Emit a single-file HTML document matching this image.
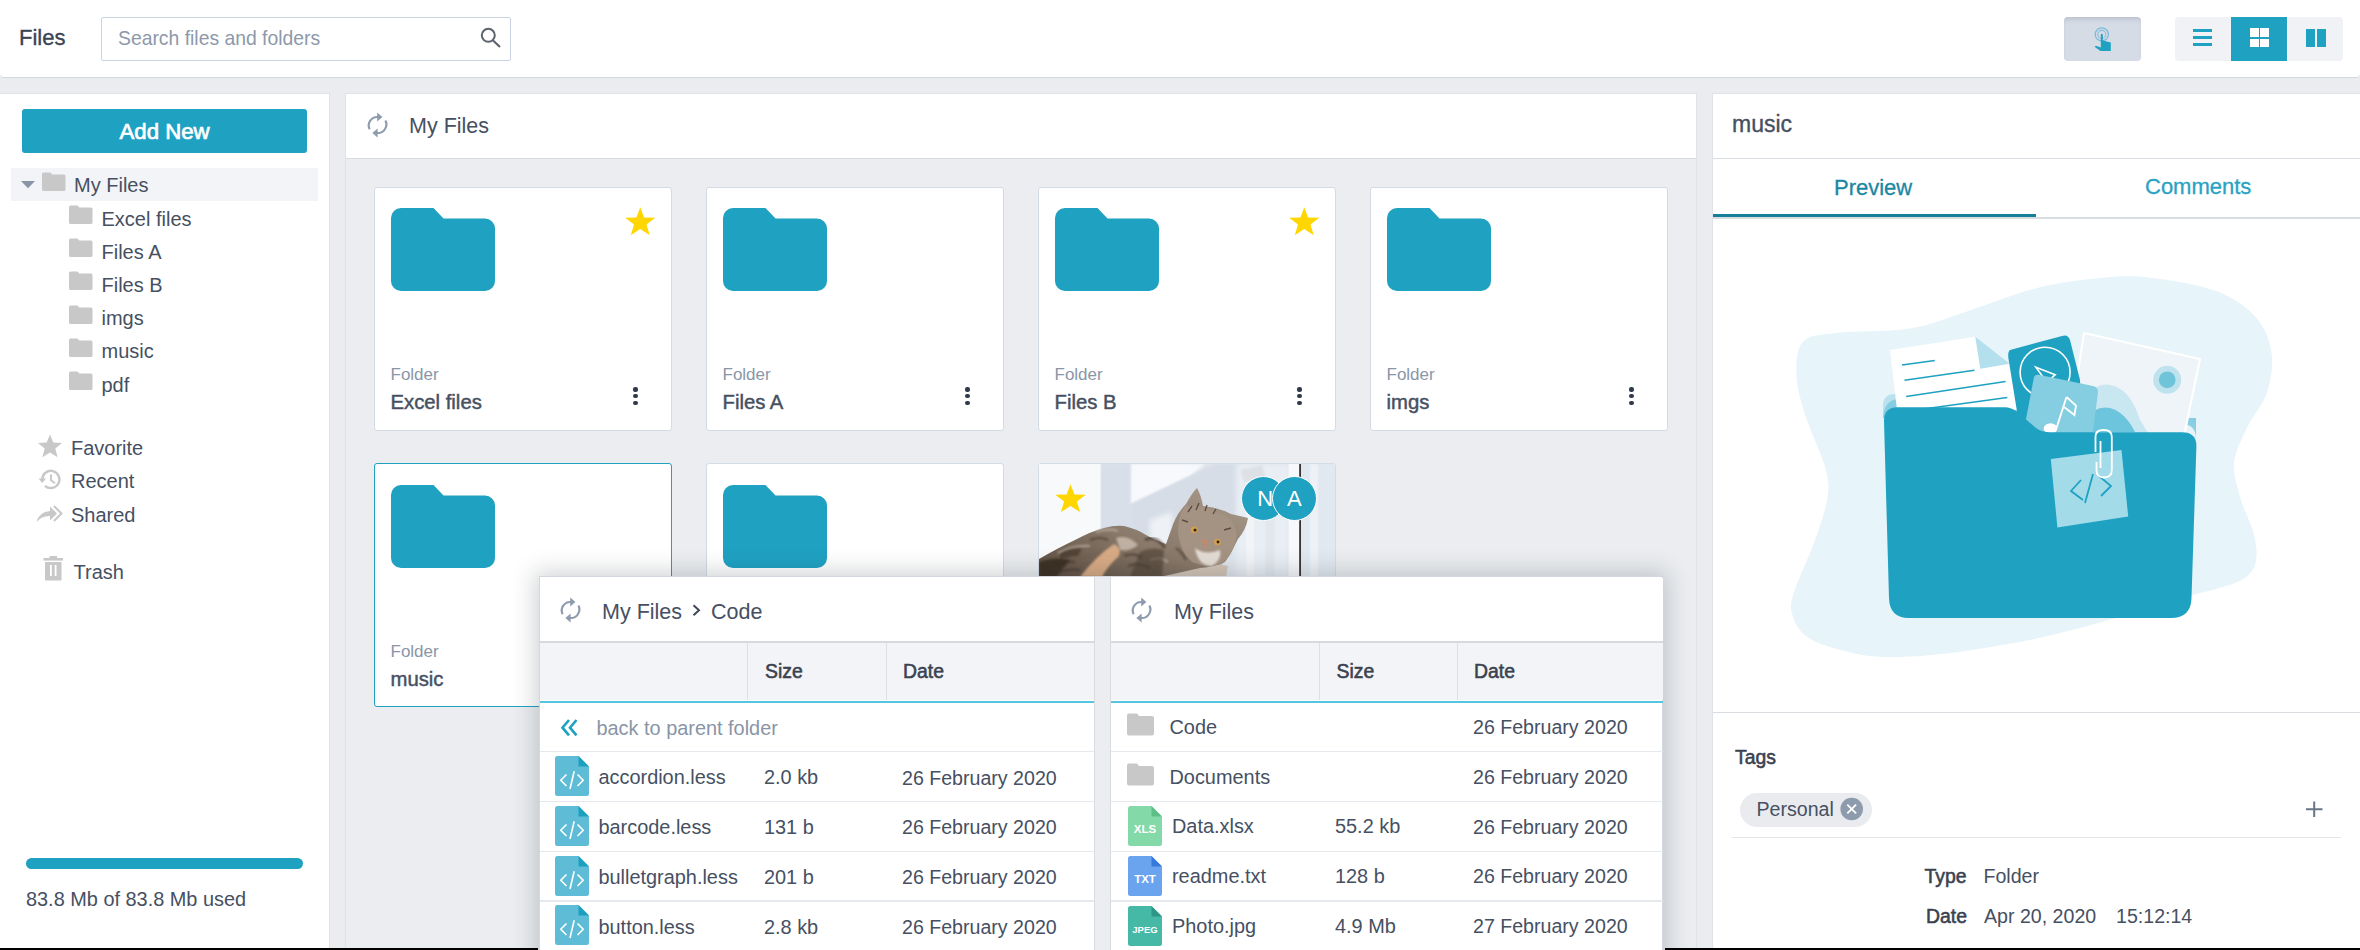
<!DOCTYPE html>
<html><head><meta charset="utf-8">
<style>
*{box-sizing:border-box;margin:0;padding:0}
html,body{width:2360px;height:950px;overflow:hidden}
body{background:#eaecf0;font-family:"Liberation Sans",sans-serif;color:#3f4857;position:relative}
.a{position:absolute}
.t{position:absolute;white-space:pre;line-height:1}
</style></head><body>
<div class="a" style="left:0px;top:0px;width:2360px;height:78px;background:#fff;border-bottom:1px solid #d4d8de;border-radius:0 0 4px 4px"></div>
<div class="t" style="left:19.00px;top:26.88px;font-size:22px;color:#3b4453;font-weight:400;-webkit-text-stroke:0.35px #3b4453">Files</div>
<div class="a" style="left:101px;top:17px;width:409.5px;height:44px;border:1.2px solid #cad4e0;border-radius:2px;background:#fff"></div>
<div class="t" style="left:118.00px;top:29.12px;font-size:19.35px;color:#8d99aa;font-weight:400;">Search files and folders</div>
<svg class="a" style="left:476px;top:24px;" width="30" height="30" viewBox="0 0 30 30"><circle cx="12.3" cy="11.3" r="6.5" fill="none" stroke="#5c636e" stroke-width="2"/><line x1="16.8" y1="16.2" x2="24" y2="23" stroke="#5c636e" stroke-width="2.2" stroke-linecap="butt"/></svg>
<div class="a" style="left:2064px;top:17px;width:77px;height:44px;background:linear-gradient(#c9d0dc,#d6dce6 8px,#d6dce6);border-radius:4px;box-shadow:inset 0 2px 3px rgba(0,0,0,.06)"></div>
<svg class="a" style="left:2085px;top:20px;" width="35" height="38" viewBox="0 0 35 38"><circle cx="16.8" cy="14.4" r="6.6" fill="none" stroke="#43a3d0" stroke-width="1.3" opacity=".6"/><circle cx="16.8" cy="14.4" r="4" fill="none" stroke="#43a3d0" stroke-width="1.1" opacity=".55"/><path d="M15.8 14.5 Q16.8 13.2 17.8 14.5 L17.8 20.5 L25.8 22.5 L25.8 31 L15.5 31 L9.5 26.8 Q10.2 25.6 11.6 26 L15.8 27.6 Z" fill="#1fa1c2"/></svg>
<div class="a" style="left:2175px;top:17px;width:56px;height:44px;background:#f0f2f6;border-radius:4px 0 0 4px"></div>
<div class="a" style="left:2231px;top:17px;width:56px;height:44px;background:#1fa1c2"></div>
<div class="a" style="left:2288px;top:17px;width:55px;height:44px;background:#f0f2f6;border-radius:0 4px 4px 0"></div>
<div class="a" style="left:2193px;top:28.5px;width:19px;height:3.5px;background:#1fa1c2"></div>
<div class="a" style="left:2193px;top:35.5px;width:19px;height:3.5px;background:#1fa1c2"></div>
<div class="a" style="left:2193px;top:42.5px;width:19px;height:3.5px;background:#1fa1c2"></div>
<div class="a" style="left:2249.5px;top:28px;width:9.0px;height:9px;background:#fff"></div>
<div class="a" style="left:2260px;top:28px;width:9px;height:9px;background:#fff"></div>
<div class="a" style="left:2249.5px;top:38.5px;width:9.0px;height:8.5px;background:#fff"></div>
<div class="a" style="left:2260px;top:38.5px;width:9px;height:8.5px;background:#fff"></div>
<div class="a" style="left:2306px;top:29px;width:9px;height:17.5px;background:#1fa1c2"></div>
<div class="a" style="left:2317px;top:29px;width:8.5px;height:17.5px;background:#1fa1c2"></div>
<div class="a" style="left:-2px;top:93px;width:332px;height:867px;background:#fff;border:1px solid #dfe2e7"></div>
<div class="a" style="left:345px;top:93px;width:1352px;height:867px;background:#ebedf0;border:1px solid #dfe2e7"></div>
<div class="a" style="left:346px;top:94px;width:1350px;height:65px;background:#fff;border-bottom:1px solid #d8dce2"></div>
<div class="a" style="left:1712px;top:93px;width:658px;height:867px;background:#fff;border:1px solid #dfe2e7"></div>
<div class="a" style="left:22px;top:109px;width:285px;height:44px;background:#1fa1c2;border-radius:3px"></div>
<div class="t" style="left:119.50px;top:121.21px;font-size:22.2px;color:#ffffff;font-weight:400;-webkit-text-stroke:0.7px #fff">Add New</div>
<div class="a" style="left:11px;top:168px;width:307px;height:33px;background:#f2f4f7"></div>
<svg class="a" style="left:18px;top:176px;" width="20" height="16" viewBox="0 0 20 16"><path d="M3 5 L17 5 L10 12.2 Z" fill="#8995a6"/></svg>
<svg class="a" style="left:40.5px;top:172px;" width="26" height="20" viewBox="0 0 26 20"><path d="M1 2.2 Q1 0.5 2.7 0.5 L9.5 0.5 L11.3 2.5 L23 2.5 Q24.5 2.5 24.5 4 L24.5 17.5 Q24.5 19 23 19 L2.5 19 Q1 19 1 17.5 Z" fill="#c8c8c8"/></svg>
<div class="t" style="left:74.00px;top:175.37px;font-size:20px;color:#465062;font-weight:400;">My Files</div>
<svg class="a" style="left:68px;top:205.0px;" width="26" height="20" viewBox="0 0 26 20"><path d="M1 2.2 Q1 0.5 2.7 0.5 L9.5 0.5 L11.3 2.5 L23 2.5 Q24.5 2.5 24.5 4 L24.5 17.5 Q24.5 19 23 19 L2.5 19 Q1 19 1 17.5 Z" fill="#c8c8c8"/></svg>
<div class="t" style="left:101.50px;top:208.57px;font-size:20px;color:#465062;font-weight:400;">Excel files</div>
<svg class="a" style="left:68px;top:238.2px;" width="26" height="20" viewBox="0 0 26 20"><path d="M1 2.2 Q1 0.5 2.7 0.5 L9.5 0.5 L11.3 2.5 L23 2.5 Q24.5 2.5 24.5 4 L24.5 17.5 Q24.5 19 23 19 L2.5 19 Q1 19 1 17.5 Z" fill="#c8c8c8"/></svg>
<div class="t" style="left:101.50px;top:241.77px;font-size:20px;color:#465062;font-weight:400;">Files A</div>
<svg class="a" style="left:68px;top:271.4px;" width="26" height="20" viewBox="0 0 26 20"><path d="M1 2.2 Q1 0.5 2.7 0.5 L9.5 0.5 L11.3 2.5 L23 2.5 Q24.5 2.5 24.5 4 L24.5 17.5 Q24.5 19 23 19 L2.5 19 Q1 19 1 17.5 Z" fill="#c8c8c8"/></svg>
<div class="t" style="left:101.50px;top:274.97px;font-size:20px;color:#465062;font-weight:400;">Files B</div>
<svg class="a" style="left:68px;top:304.6px;" width="26" height="20" viewBox="0 0 26 20"><path d="M1 2.2 Q1 0.5 2.7 0.5 L9.5 0.5 L11.3 2.5 L23 2.5 Q24.5 2.5 24.5 4 L24.5 17.5 Q24.5 19 23 19 L2.5 19 Q1 19 1 17.5 Z" fill="#c8c8c8"/></svg>
<div class="t" style="left:101.50px;top:308.17px;font-size:20px;color:#465062;font-weight:400;">imgs</div>
<svg class="a" style="left:68px;top:337.8px;" width="26" height="20" viewBox="0 0 26 20"><path d="M1 2.2 Q1 0.5 2.7 0.5 L9.5 0.5 L11.3 2.5 L23 2.5 Q24.5 2.5 24.5 4 L24.5 17.5 Q24.5 19 23 19 L2.5 19 Q1 19 1 17.5 Z" fill="#c8c8c8"/></svg>
<div class="t" style="left:101.50px;top:341.37px;font-size:20px;color:#465062;font-weight:400;">music</div>
<svg class="a" style="left:68px;top:371.0px;" width="26" height="20" viewBox="0 0 26 20"><path d="M1 2.2 Q1 0.5 2.7 0.5 L9.5 0.5 L11.3 2.5 L23 2.5 Q24.5 2.5 24.5 4 L24.5 17.5 Q24.5 19 23 19 L2.5 19 Q1 19 1 17.5 Z" fill="#c8c8c8"/></svg>
<div class="t" style="left:101.50px;top:374.57px;font-size:20px;color:#465062;font-weight:400;">pdf</div>
<svg class="a" style="left:36px;top:433px;" width="28" height="26" viewBox="0 0 28 26"><path d="M14 1.5 L17.3 9.6 L26 10 L19.3 15.6 L21.6 24.3 L14 19.4 L6.4 24.3 L8.7 15.6 L2 10 L10.7 9.6 Z" fill="#c8c8c8"/></svg>
<div class="t" style="left:71.00px;top:437.57px;font-size:20px;color:#465062;font-weight:400;">Favorite</div>
<svg class="a" style="left:36px;top:466px;" width="28" height="27" viewBox="0 0 28 27"><path d="M6.2 13.5 A8.6 8.6 0 1 1 9 19.8" fill="none" stroke="#c8c8c8" stroke-width="2.4"/><path d="M2.5 12.5 L6.2 17 L10 12.5 Z" fill="#c8c8c8"/><path d="M15 8.5 L15 14.2 L19 17.2" fill="none" stroke="#c8c8c8" stroke-width="2"/></svg>
<div class="t" style="left:71.00px;top:471.07px;font-size:20px;color:#465062;font-weight:400;">Recent</div>
<svg class="a" style="left:34px;top:502px;" width="32" height="22" viewBox="0 0 32 22"><path d="M2.5 20 Q5 10 16 9 L16 4.5 L23 11.5 L16 18.5 L16 14 Q8 13.5 2.5 20 Z" fill="#c8c8c8"/><path d="M20 4 L27.5 11.5 L20 19" fill="none" stroke="#c8c8c8" stroke-width="2"/></svg>
<div class="t" style="left:71.00px;top:504.67px;font-size:20px;color:#465062;font-weight:400;">Shared</div>
<svg class="a" style="left:42px;top:556px;" width="24" height="26" viewBox="0 0 24 26"><rect x="1.5" y="2" width="19.5" height="2.6" fill="#c8c8c8"/><rect x="7.5" y="0" width="7.5" height="2.5" fill="#c8c8c8"/><path d="M3 6 L19.5 6 L19.5 23.5 Q19.5 24.5 18.5 24.5 L4 24.5 Q3 24.5 3 23.5 Z" fill="#c8c8c8"/><rect x="8" y="9" width="1.8" height="11" fill="#fff"/><rect x="12.7" y="9" width="1.8" height="11" fill="#fff"/></svg>
<div class="t" style="left:73.50px;top:562.27px;font-size:20px;color:#465062;font-weight:400;">Trash</div>
<div class="a" style="left:26px;top:858px;width:277px;height:11px;background:#1fa1c2;border-radius:6px"></div>
<div class="t" style="left:26.00px;top:889.65px;font-size:19.9px;color:#465062;font-weight:400;">83.8 Mb of 83.8 Mb used</div>
<svg class="a" style="left:360px;top:108px;" width="36" height="34" viewBox="0 0 36 34"><path d="M9.6 21.3 A8.6 8.6 0 0 1 18 9" fill="none" stroke="#8e9bae" stroke-width="2.15"/><path d="M17.2 4.6 L22.4 9 L17.2 13.4 Z" fill="#8e9bae"/><path d="M25.4 12.5 A8.6 8.6 0 0 1 17 25" fill="none" stroke="#8e9bae" stroke-width="2.15"/><path d="M17.6 20.6 L12.4 25 L17.6 29.4 Z" fill="#8e9bae"/></svg>
<div class="t" style="left:409.00px;top:116.00px;font-size:21.5px;color:#465062;font-weight:400;">My Files</div>
<div class="a" style="left:374px;top:187px;width:298px;height:244px;background:#fff;border:1px solid #d3dbe5;border-radius:3px"></div>
<svg class="a" style="left:390.5px;top:208px;" width="106" height="85" viewBox="0 0 106 85"><path d="M0 10 A10 10 0 0 1 10 0 L42.5 0 L52.5 10.5 L94 10.5 A10 10 0 0 1 104 20.5 L104 73 A10 10 0 0 1 94 83 L10 83 A10 10 0 0 1 0 73 Z" fill="#1fa1c2"/></svg>
<svg class="a" style="left:625px;top:206.8px" width="30.5" height="28.5" viewBox="0 0 29.5 28" preserveAspectRatio="none"><path d="M14.75 0.3 L18.5 10.2 L29.3 10.5 L20.8 17.1 L23.9 27.7 L14.75 21.5 L5.6 27.7 L8.7 17.1 L0.2 10.5 L11 10.2 Z" fill="#ffd600"/></svg>
<div class="t" style="left:390.50px;top:365.91px;font-size:17px;color:#8a96a7;font-weight:400;">Folder</div>
<div class="t" style="left:390.50px;top:392.32px;font-size:20.3px;color:#465062;font-weight:400;-webkit-text-stroke:0.45px #465062">Excel files</div>
<div class="a" style="left:633.4px;top:387.4px;width:4.2px;height:4.2px;border-radius:50%;background:#2f3a4a"></div>
<div class="a" style="left:633.4px;top:394.25px;width:4.2px;height:4.2px;border-radius:50%;background:#2f3a4a"></div>
<div class="a" style="left:633.4px;top:401.09999999999997px;width:4.2px;height:4.2px;border-radius:50%;background:#2f3a4a"></div>
<div class="a" style="left:706px;top:187px;width:298px;height:244px;background:#fff;border:1px solid #d3dbe5;border-radius:3px"></div>
<svg class="a" style="left:722.5px;top:208px;" width="106" height="85" viewBox="0 0 106 85"><path d="M0 10 A10 10 0 0 1 10 0 L42.5 0 L52.5 10.5 L94 10.5 A10 10 0 0 1 104 20.5 L104 73 A10 10 0 0 1 94 83 L10 83 A10 10 0 0 1 0 73 Z" fill="#1fa1c2"/></svg>
<div class="t" style="left:722.50px;top:365.91px;font-size:17px;color:#8a96a7;font-weight:400;">Folder</div>
<div class="t" style="left:722.50px;top:392.32px;font-size:20.3px;color:#465062;font-weight:400;-webkit-text-stroke:0.45px #465062">Files A</div>
<div class="a" style="left:965.4px;top:387.4px;width:4.2px;height:4.2px;border-radius:50%;background:#2f3a4a"></div>
<div class="a" style="left:965.4px;top:394.25px;width:4.2px;height:4.2px;border-radius:50%;background:#2f3a4a"></div>
<div class="a" style="left:965.4px;top:401.09999999999997px;width:4.2px;height:4.2px;border-radius:50%;background:#2f3a4a"></div>
<div class="a" style="left:1038px;top:187px;width:298px;height:244px;background:#fff;border:1px solid #d3dbe5;border-radius:3px"></div>
<svg class="a" style="left:1054.5px;top:208px;" width="106" height="85" viewBox="0 0 106 85"><path d="M0 10 A10 10 0 0 1 10 0 L42.5 0 L52.5 10.5 L94 10.5 A10 10 0 0 1 104 20.5 L104 73 A10 10 0 0 1 94 83 L10 83 A10 10 0 0 1 0 73 Z" fill="#1fa1c2"/></svg>
<svg class="a" style="left:1289px;top:206.8px" width="30.5" height="28.5" viewBox="0 0 29.5 28" preserveAspectRatio="none"><path d="M14.75 0.3 L18.5 10.2 L29.3 10.5 L20.8 17.1 L23.9 27.7 L14.75 21.5 L5.6 27.7 L8.7 17.1 L0.2 10.5 L11 10.2 Z" fill="#ffd600"/></svg>
<div class="t" style="left:1054.50px;top:365.91px;font-size:17px;color:#8a96a7;font-weight:400;">Folder</div>
<div class="t" style="left:1054.50px;top:392.32px;font-size:20.3px;color:#465062;font-weight:400;-webkit-text-stroke:0.45px #465062">Files B</div>
<div class="a" style="left:1297.4px;top:387.4px;width:4.2px;height:4.2px;border-radius:50%;background:#2f3a4a"></div>
<div class="a" style="left:1297.4px;top:394.25px;width:4.2px;height:4.2px;border-radius:50%;background:#2f3a4a"></div>
<div class="a" style="left:1297.4px;top:401.09999999999997px;width:4.2px;height:4.2px;border-radius:50%;background:#2f3a4a"></div>
<div class="a" style="left:1370px;top:187px;width:298px;height:244px;background:#fff;border:1px solid #d3dbe5;border-radius:3px"></div>
<svg class="a" style="left:1386.5px;top:208px;" width="106" height="85" viewBox="0 0 106 85"><path d="M0 10 A10 10 0 0 1 10 0 L42.5 0 L52.5 10.5 L94 10.5 A10 10 0 0 1 104 20.5 L104 73 A10 10 0 0 1 94 83 L10 83 A10 10 0 0 1 0 73 Z" fill="#1fa1c2"/></svg>
<div class="t" style="left:1386.50px;top:365.91px;font-size:17px;color:#8a96a7;font-weight:400;">Folder</div>
<div class="t" style="left:1386.50px;top:392.32px;font-size:20.3px;color:#465062;font-weight:400;-webkit-text-stroke:0.45px #465062">imgs</div>
<div class="a" style="left:1629.4px;top:387.4px;width:4.2px;height:4.2px;border-radius:50%;background:#2f3a4a"></div>
<div class="a" style="left:1629.4px;top:394.25px;width:4.2px;height:4.2px;border-radius:50%;background:#2f3a4a"></div>
<div class="a" style="left:1629.4px;top:401.09999999999997px;width:4.2px;height:4.2px;border-radius:50%;background:#2f3a4a"></div>
<div class="a" style="left:374px;top:463px;width:298px;height:244px;background:#fff;border:1.5px solid #1fa1c2;border-radius:3px"></div>
<svg class="a" style="left:390.5px;top:484.5px;" width="106" height="85" viewBox="0 0 106 85"><path d="M0 10 A10 10 0 0 1 10 0 L42.5 0 L52.5 10.5 L94 10.5 A10 10 0 0 1 104 20.5 L104 73 A10 10 0 0 1 94 83 L10 83 A10 10 0 0 1 0 73 Z" fill="#1fa1c2"/></svg>
<div class="t" style="left:390.50px;top:642.61px;font-size:17px;color:#8a96a7;font-weight:400;">Folder</div>
<div class="t" style="left:390.50px;top:668.82px;font-size:20.3px;color:#465062;font-weight:400;-webkit-text-stroke:0.45px #465062">music</div>
<div class="a" style="left:706px;top:463px;width:298px;height:244px;background:#fff;border:1px solid #d3dbe5;border-radius:3px"></div>
<svg class="a" style="left:722.5px;top:484.5px;" width="106" height="85" viewBox="0 0 106 85"><path d="M0 10 A10 10 0 0 1 10 0 L42.5 0 L52.5 10.5 L94 10.5 A10 10 0 0 1 104 20.5 L104 73 A10 10 0 0 1 94 83 L10 83 A10 10 0 0 1 0 73 Z" fill="#1fa1c2"/></svg>
<div class="a" style="left:1038px;top:463px;width:298px;height:244px;background:#fff;border:1px solid #d3dbe5;border-radius:3px"></div>
<svg class="a" style="left:1039px;top:464px" width="296" height="113" viewBox="1039 464 296 113">
<defs>
<filter id="bl"><feGaussianBlur stdDeviation="1"/></filter>
<filter id="bl2"><feGaussianBlur stdDeviation="2.5"/></filter>
<linearGradient id="catB" x1="0" y1="1" x2="1" y2="0">
<stop offset="0" stop-color="#5a4a3d"/><stop offset=".45" stop-color="#8a7a6b"/><stop offset="1" stop-color="#a99b8d"/>
</linearGradient>
</defs>
<rect x="1039" y="464" width="296" height="113" fill="#dfe5ed"/>
<rect x="1039" y="464" width="62" height="113" fill="#f8f9fb"/>
<rect x="1101" y="464" width="30" height="113" fill="#d8dfe9" filter="url(#bl)"/>
<path d="M1131 464 L1205 464 L1190 476 L1131 504 Z" fill="#f7f9fc" filter="url(#bl)"/>
<path d="M1131 504 L1190 476 L1215 464 L1240 464 L1236 540 L1131 540 Z" fill="#d6dde7" filter="url(#bl)"/>
<path d="M1150 520 L1172 512 L1172 548 L1150 548 Z" fill="#eef2f6" filter="url(#bl2)"/>
<rect x="1236" y="464" width="53" height="113" fill="#e9eef4" filter="url(#bl2)"/>
<path d="M1240 470 L1262 465 L1266 478 L1244 482 Z" fill="#cfd2d6" opacity=".45" filter="url(#bl)"/>
<rect x="1246" y="484" width="8" height="93" fill="#f5f7fa" opacity=".8" filter="url(#bl)"/>
<rect x="1265" y="484" width="10" height="93" fill="#dfe6ee" opacity=".8" filter="url(#bl)"/>
<rect x="1288.5" y="464" width="10.5" height="113" fill="#f6f8fb"/>
<rect x="1299.2" y="464" width="1.9" height="113" fill="#3a3432"/>
<rect x="1301.1" y="464" width="34" height="113" fill="#e1e8f0"/>
<rect x="1310" y="464" width="8" height="113" fill="#eef2f7" filter="url(#bl)"/>
<!-- basket -->
<path d="M1160 577 L1165 566 L1215 563 L1228 566 L1226 577 Z" fill="#d2c4b6"/>
<!-- body -->
<path d="M1039 577 L1039 559 Q1058 548 1075 540 Q1092 531 1104 528 Q1115 525 1124 526 Q1137 529 1146 535 Q1156 541 1166 544 L1171 530 Q1176 514 1186 504 Q1192 493 1197 488 Q1201 495 1203 506 Q1220 508 1231 514 Q1240 516 1248 518 Q1246 530 1238 539 Q1232 552 1225 562 Q1215 567 1200 568 L1160 577 Z" fill="url(#catB)"/>
<path d="M1039 577 L1039 562 Q1055 556 1070 560 Q1062 570 1056 577 Z" fill="#35291f" opacity=".8" filter="url(#bl)"/>
<path d="M1060 552 Q1070 546 1082 548 L1078 556 Q1068 556 1060 560 Z" fill="#3c3027" opacity=".6" filter="url(#bl)"/>
<path d="M1080 577 Q1096 556 1114 544 Q1122 547 1119 556 Q1106 568 1102 577 Z" fill="#d8aa84" filter="url(#bl)"/><path d="M1045 570 Q1060 560 1075 562 M1050 576 Q1065 568 1080 570 M1090 540 Q1100 536 1108 540 M1124 556 Q1134 552 1142 558 M1128 566 Q1138 562 1150 568 M1176 548 Q1182 552 1186 560" stroke="#3b2f26" stroke-width="2.2" fill="none" opacity=".55" filter="url(#bl)"/><path d="M1058 553 Q1072 545 1090 546 M1096 532 Q1108 528 1118 531 M1150 560 Q1160 556 1168 562" stroke="#c9bdb2" stroke-width="2.2" fill="none" opacity=".6" filter="url(#bl)"/>
<path d="M1116 538 Q1128 534 1138 545 Q1130 552 1120 550 Z" fill="#cdbfb3" opacity=".8" filter="url(#bl)"/>
<path d="M1140 552 Q1152 546 1164 550 L1162 577 L1130 577 Z" fill="#473a2f" opacity=".55" filter="url(#bl)"/>
<path d="M1145 540 Q1155 534 1165 548" stroke="#3a2e25" stroke-width="3" fill="none" opacity=".6" filter="url(#bl)"/>
<!-- head -->
<path d="M1185 506 Q1205 504 1225 516 Q1238 522 1236 540 Q1232 556 1222 564 Q1205 568 1192 562 Q1180 552 1178 532 Q1178 515 1185 506 Z" fill="#a49282"/>
<path d="M1188 512 L1192 506 M1196 510 L1199 503 M1205 511 L1207 505 M1213 514 L1216 509 M1182 520 L1188 522 M1224 530 L1231 528" stroke="#4a3c31" stroke-width="1.4" opacity=".8"/>
<path d="M1195 548 Q1205 556 1220 550 Q1222 560 1212 566 Q1198 566 1195 548 Z" fill="#ece6df" opacity=".9" filter="url(#bl)"/>
<circle cx="1194.2" cy="529.8" r="3.4" fill="#d3a04e"/><circle cx="1195" cy="530" r="1.5" fill="#2c221b"/>
<circle cx="1217.4" cy="542" r="3.3" fill="#d3a04e"/><circle cx="1218" cy="542" r="1.4" fill="#2c221b"/>
<path d="M1201 539 L1209 541 L1205 548 Z" fill="#c08a6e"/>
</svg>
<div class="a" style="left:1241.2px;top:476.29999999999995px;width:45.2px;height:45.2px;border-radius:50%;background:#1fa1c2;border:1.6px solid #fff"></div>
<div class="a" style="left:1271.8000000000002px;top:476.29999999999995px;width:45.2px;height:45.2px;border-radius:50%;background:#1fa1c2;border:1.6px solid #fff"></div>
<div class="t" style="left:1257.20px;top:487.58px;font-size:22px;color:#fff;font-weight:400;">N</div>
<div class="t" style="left:1287.00px;top:487.58px;font-size:22px;color:#fff;font-weight:400;">A</div>
<svg class="a" style="left:1054.5px;top:483.5px" width="31" height="28.5" viewBox="0 0 29.5 28" preserveAspectRatio="none"><path d="M14.75 0.3 L18.5 10.2 L29.3 10.5 L20.8 17.1 L23.9 27.7 L14.75 21.5 L5.6 27.7 L8.7 17.1 L0.2 10.5 L11 10.2 Z" fill="#ffd600"/></svg>
<div class="a" style="left:539px;top:576.3px;width:1124px;height:398.70000000000005px;background:#fff;border:1.5px solid #d3d8de;box-shadow:0 0 22px 4px rgba(40,50,60,.22)"></div>
<div class="a" style="left:1093.5px;top:577.3px;width:17.0px;height:397.70000000000005px;background:#ebedf0;border-left:1.5px solid #d8dce1;border-right:1.5px solid #d8dce1"></div>
<div class="a" style="left:540px;top:577.8px;width:553.5px;height:63.200000000000045px;background:#fff"></div>
<div class="a" style="left:540px;top:641px;width:553.5px;height:1.5px;background:#d6dade"></div>
<svg class="a" style="left:553px;top:593px;" width="36" height="34" viewBox="0 0 36 34"><path d="M9.6 21.3 A8.6 8.6 0 0 1 18 9" fill="none" stroke="#8e9bae" stroke-width="2.15"/><path d="M17.2 4.6 L22.4 9 L17.2 13.4 Z" fill="#8e9bae"/><path d="M25.4 12.5 A8.6 8.6 0 0 1 17 25" fill="none" stroke="#8e9bae" stroke-width="2.15"/><path d="M17.6 20.6 L12.4 25 L17.6 29.4 Z" fill="#8e9bae"/></svg>
<div class="t" style="left:602.00px;top:601.60px;font-size:21.5px;color:#465062;font-weight:400;">My Files</div>
<svg class="a" style="left:690px;top:602px;" width="14" height="16" viewBox="0 0 14 16"><path d="M3.5 3.3 L9 8.3 L3.5 13.3" fill="none" stroke="#3f4857" stroke-width="2"/></svg>
<div class="t" style="left:711.00px;top:601.60px;font-size:21.5px;color:#465062;font-weight:400;">Code</div>
<div class="a" style="left:540px;top:642.5px;width:553.5px;height:57.5px;background:#f3f4f7"></div>
<div class="a" style="left:747px;top:642.5px;width:1.2000000000000455px;height:57.5px;background:#dcdfe4"></div>
<div class="a" style="left:886px;top:642.5px;width:1.2000000000000455px;height:57.5px;background:#dcdfe4"></div>
<div class="t" style="left:765.00px;top:662.48px;font-size:19.4px;color:#3a4250;font-weight:400;-webkit-text-stroke:0.55px #3a4250">Size</div>
<div class="t" style="left:903.00px;top:662.48px;font-size:19.4px;color:#3a4250;font-weight:400;-webkit-text-stroke:0.55px #3a4250">Date</div>
<div class="a" style="left:540px;top:700.5px;width:553.5px;height:2.0px;background:#58c5e0"></div>
<div class="a" style="left:540px;top:751.0px;width:553.5px;height:1.2999999999999545px;background:#e5e8ec"></div>
<div class="a" style="left:540px;top:800.8px;width:553.5px;height:1.2999999999999545px;background:#e5e8ec"></div>
<div class="a" style="left:540px;top:850.6px;width:553.5px;height:1.2999999999999545px;background:#e5e8ec"></div>
<div class="a" style="left:540px;top:900.4px;width:553.5px;height:1.2999999999999545px;background:#e5e8ec"></div>
<div class="a" style="left:540px;top:950.2px;width:553.5px;height:1.2999999999999545px;background:#e5e8ec"></div>
<svg class="a" style="left:556px;top:716px;" width="28" height="24" viewBox="0 0 28 24"><path d="M13 4 L6.5 11.7 L13 19.4 M20.5 4 L14 11.7 L20.5 19.4" fill="none" stroke="#1fa1c2" stroke-width="2.6"/></svg>
<div class="t" style="left:596.50px;top:719.05px;font-size:19.9px;color:#8995a6;font-weight:400;">back to parent folder</div>
<svg class="a" style="left:555px;top:756.0px;" width="34" height="40" viewBox="0 0 34 40"><path d="M2.5 0 L23.5 0 L34 10.5 L34 37.5 Q34 40 31.5 40 L2.5 40 Q0 40 0 37.5 L0 2.5 Q0 0 2.5 0 Z" fill="#5fbcd6"/><path d="M23.5 0 L34 10.5 L23.5 10.5 Z" fill="#1d9fc0"/><path d="M11.5 18.5 L5.8 24.3 L11.5 30" fill="none" stroke="#fff" stroke-width="1.6"/><path d="M22.5 18.5 L28.2 24.3 L22.5 30" fill="none" stroke="#fff" stroke-width="1.6"/><path d="M19.2 15.3 L15 33" stroke="#fff" stroke-width="1.6"/></svg>
<div class="t" style="left:598.50px;top:768.25px;font-size:19.9px;color:#465062;font-weight:400;">accordion.less</div>
<div class="t" style="left:764.00px;top:768.25px;font-size:19.9px;color:#465062;font-weight:400;">2.0 kb</div>
<div class="t" style="left:902.00px;top:768.51px;font-size:19.6px;color:#465062;font-weight:400;">26 February 2020</div>
<svg class="a" style="left:555px;top:805.8px;" width="34" height="40" viewBox="0 0 34 40"><path d="M2.5 0 L23.5 0 L34 10.5 L34 37.5 Q34 40 31.5 40 L2.5 40 Q0 40 0 37.5 L0 2.5 Q0 0 2.5 0 Z" fill="#5fbcd6"/><path d="M23.5 0 L34 10.5 L23.5 10.5 Z" fill="#1d9fc0"/><path d="M11.5 18.5 L5.8 24.3 L11.5 30" fill="none" stroke="#fff" stroke-width="1.6"/><path d="M22.5 18.5 L28.2 24.3 L22.5 30" fill="none" stroke="#fff" stroke-width="1.6"/><path d="M19.2 15.3 L15 33" stroke="#fff" stroke-width="1.6"/></svg>
<div class="t" style="left:598.50px;top:818.05px;font-size:19.9px;color:#465062;font-weight:400;">barcode.less</div>
<div class="t" style="left:764.00px;top:818.05px;font-size:19.9px;color:#465062;font-weight:400;">131 b</div>
<div class="t" style="left:902.00px;top:818.31px;font-size:19.6px;color:#465062;font-weight:400;">26 February 2020</div>
<svg class="a" style="left:555px;top:855.6px;" width="34" height="40" viewBox="0 0 34 40"><path d="M2.5 0 L23.5 0 L34 10.5 L34 37.5 Q34 40 31.5 40 L2.5 40 Q0 40 0 37.5 L0 2.5 Q0 0 2.5 0 Z" fill="#5fbcd6"/><path d="M23.5 0 L34 10.5 L23.5 10.5 Z" fill="#1d9fc0"/><path d="M11.5 18.5 L5.8 24.3 L11.5 30" fill="none" stroke="#fff" stroke-width="1.6"/><path d="M22.5 18.5 L28.2 24.3 L22.5 30" fill="none" stroke="#fff" stroke-width="1.6"/><path d="M19.2 15.3 L15 33" stroke="#fff" stroke-width="1.6"/></svg>
<div class="t" style="left:598.50px;top:867.85px;font-size:19.9px;color:#465062;font-weight:400;">bulletgraph.less</div>
<div class="t" style="left:764.00px;top:867.85px;font-size:19.9px;color:#465062;font-weight:400;">201 b</div>
<div class="t" style="left:902.00px;top:868.11px;font-size:19.6px;color:#465062;font-weight:400;">26 February 2020</div>
<svg class="a" style="left:555px;top:905.4px;" width="34" height="40" viewBox="0 0 34 40"><path d="M2.5 0 L23.5 0 L34 10.5 L34 37.5 Q34 40 31.5 40 L2.5 40 Q0 40 0 37.5 L0 2.5 Q0 0 2.5 0 Z" fill="#5fbcd6"/><path d="M23.5 0 L34 10.5 L23.5 10.5 Z" fill="#1d9fc0"/><path d="M11.5 18.5 L5.8 24.3 L11.5 30" fill="none" stroke="#fff" stroke-width="1.6"/><path d="M22.5 18.5 L28.2 24.3 L22.5 30" fill="none" stroke="#fff" stroke-width="1.6"/><path d="M19.2 15.3 L15 33" stroke="#fff" stroke-width="1.6"/></svg>
<div class="t" style="left:598.50px;top:917.65px;font-size:19.9px;color:#465062;font-weight:400;">button.less</div>
<div class="t" style="left:764.00px;top:917.65px;font-size:19.9px;color:#465062;font-weight:400;">2.8 kb</div>
<div class="t" style="left:902.00px;top:917.91px;font-size:19.6px;color:#465062;font-weight:400;">26 February 2020</div>
<div class="a" style="left:1110.5px;top:577.8px;width:552.5px;height:63.200000000000045px;background:#fff"></div>
<div class="a" style="left:1110.5px;top:641px;width:552.5px;height:1.5px;background:#d6dade"></div>
<svg class="a" style="left:1123.5px;top:593px;" width="36" height="34" viewBox="0 0 36 34"><path d="M9.6 21.3 A8.6 8.6 0 0 1 18 9" fill="none" stroke="#8e9bae" stroke-width="2.15"/><path d="M17.2 4.6 L22.4 9 L17.2 13.4 Z" fill="#8e9bae"/><path d="M25.4 12.5 A8.6 8.6 0 0 1 17 25" fill="none" stroke="#8e9bae" stroke-width="2.15"/><path d="M17.6 20.6 L12.4 25 L17.6 29.4 Z" fill="#8e9bae"/></svg>
<div class="t" style="left:1174.00px;top:601.60px;font-size:21.5px;color:#465062;font-weight:400;">My Files</div>
<div class="a" style="left:1110.5px;top:642.5px;width:552.5px;height:57.5px;background:#f3f4f7"></div>
<div class="a" style="left:1318.5px;top:642.5px;width:1.2000000000000455px;height:57.5px;background:#dcdfe4"></div>
<div class="a" style="left:1457px;top:642.5px;width:1.2000000000000455px;height:57.5px;background:#dcdfe4"></div>
<div class="t" style="left:1336.50px;top:662.48px;font-size:19.4px;color:#3a4250;font-weight:400;-webkit-text-stroke:0.55px #3a4250">Size</div>
<div class="t" style="left:1474.00px;top:662.48px;font-size:19.4px;color:#3a4250;font-weight:400;-webkit-text-stroke:0.55px #3a4250">Date</div>
<div class="a" style="left:1110.5px;top:700.5px;width:552.5px;height:2.0px;background:#58c5e0"></div>
<div class="a" style="left:1110.5px;top:751.0px;width:552.5px;height:1.2999999999999545px;background:#e5e8ec"></div>
<div class="a" style="left:1110.5px;top:800.8px;width:552.5px;height:1.2999999999999545px;background:#e5e8ec"></div>
<div class="a" style="left:1110.5px;top:850.6px;width:552.5px;height:1.2999999999999545px;background:#e5e8ec"></div>
<div class="a" style="left:1110.5px;top:900.4px;width:552.5px;height:1.2999999999999545px;background:#e5e8ec"></div>
<div class="a" style="left:1110.5px;top:950.2px;width:552.5px;height:1.2999999999999545px;background:#e5e8ec"></div>
<svg class="a" style="left:1126px;top:713.0px;" width="30" height="24" viewBox="0 0 30 24"><path d="M1 2.5 Q1 0.5 3 0.5 L11 0.5 L13 3 L26 3 Q28 3 28 5 L28 20.5 Q28 22.5 26 22.5 L3 22.5 Q1 22.5 1 20.5 Z" fill="#c8c8c8"/></svg>
<div class="t" style="left:1169.50px;top:717.75px;font-size:19.9px;color:#465062;font-weight:400;">Code</div>
<div class="t" style="left:1473.00px;top:718.01px;font-size:19.6px;color:#465062;font-weight:400;">26 February 2020</div>
<svg class="a" style="left:1126px;top:762.8px;" width="30" height="24" viewBox="0 0 30 24"><path d="M1 2.5 Q1 0.5 3 0.5 L11 0.5 L13 3 L26 3 Q28 3 28 5 L28 20.5 Q28 22.5 26 22.5 L3 22.5 Q1 22.5 1 20.5 Z" fill="#c8c8c8"/></svg>
<div class="t" style="left:1169.50px;top:767.55px;font-size:19.9px;color:#465062;font-weight:400;">Documents</div>
<div class="t" style="left:1473.00px;top:767.81px;font-size:19.6px;color:#465062;font-weight:400;">26 February 2020</div>
<svg class="a" style="left:1127.5px;top:806.0px;" width="34" height="40" viewBox="0 0 34 40"><path d="M2.5 0 L23.5 0 L34 10.5 L34 37.5 Q34 40 31.5 40 L2.5 40 Q0 40 0 37.5 L0 2.5 Q0 0 2.5 0 Z" fill="#84d9a8"/><path d="M23.5 0 L34 10.5 L23.5 10.5 Z" fill="#5cbf87"/><text x="17" y="27.3" text-anchor="middle" font-family="Liberation Sans" font-weight="700" font-size="11.5" fill="#fff">XLS</text></svg>
<div class="t" style="left:1172.00px;top:817.35px;font-size:19.9px;color:#465062;font-weight:400;">Data.xlsx</div>
<div class="t" style="left:1335.00px;top:817.35px;font-size:19.9px;color:#465062;font-weight:400;">55.2 kb</div>
<div class="t" style="left:1473.00px;top:817.61px;font-size:19.6px;color:#465062;font-weight:400;">26 February 2020</div>
<svg class="a" style="left:1127.5px;top:855.8px;" width="34" height="40" viewBox="0 0 34 40"><path d="M2.5 0 L23.5 0 L34 10.5 L34 37.5 Q34 40 31.5 40 L2.5 40 Q0 40 0 37.5 L0 2.5 Q0 0 2.5 0 Z" fill="#6aa3ee"/><path d="M23.5 0 L34 10.5 L23.5 10.5 Z" fill="#3479dc"/><text x="17" y="27.3" text-anchor="middle" font-family="Liberation Sans" font-weight="700" font-size="11.5" fill="#fff">TXT</text></svg>
<div class="t" style="left:1172.00px;top:867.15px;font-size:19.9px;color:#465062;font-weight:400;">readme.txt</div>
<div class="t" style="left:1335.00px;top:867.15px;font-size:19.9px;color:#465062;font-weight:400;">128 b</div>
<div class="t" style="left:1473.00px;top:867.41px;font-size:19.6px;color:#465062;font-weight:400;">26 February 2020</div>
<svg class="a" style="left:1127.5px;top:905.6px;" width="34" height="40" viewBox="0 0 34 40"><path d="M2.5 0 L23.5 0 L34 10.5 L34 37.5 Q34 40 31.5 40 L2.5 40 Q0 40 0 37.5 L0 2.5 Q0 0 2.5 0 Z" fill="#45b9a6"/><path d="M23.5 0 L34 10.5 L23.5 10.5 Z" fill="#2e9686"/><text x="17" y="27.3" text-anchor="middle" font-family="Liberation Sans" font-weight="700" font-size="9.5" fill="#fff">JPEG</text></svg>
<div class="t" style="left:1172.00px;top:916.95px;font-size:19.9px;color:#465062;font-weight:400;">Photo.jpg</div>
<div class="t" style="left:1335.00px;top:916.95px;font-size:19.9px;color:#465062;font-weight:400;">4.9 Mb</div>
<div class="t" style="left:1473.00px;top:917.21px;font-size:19.6px;color:#465062;font-weight:400;">27 February 2020</div>
<div class="t" style="left:1732.00px;top:113.13px;font-size:23px;color:#465062;font-weight:400;-webkit-text-stroke:0.35px #465062">music</div>
<div class="a" style="left:1713px;top:158px;width:647px;height:1.3000000000000114px;background:#d9dde2"></div>
<div class="t" style="left:1834.00px;top:176.98px;font-size:22px;color:#1b87a3;font-weight:400;-webkit-text-stroke:0.3px #1b87a3">Preview</div>
<div class="t" style="left:2145.00px;top:175.98px;font-size:22px;color:#2aa2c2;font-weight:400;-webkit-text-stroke:0.3px #2aa2c2">Comments</div>
<div class="a" style="left:1713px;top:217px;width:647px;height:1.5px;background:#d9dde2"></div>
<div class="a" style="left:1713px;top:214px;width:323px;height:3.3000000000000114px;background:#167e99"></div>
<svg class="a" style="left:1760px;top:260px" width="540" height="440" viewBox="1760 260 540 440">
<path d="M1803.0 341.7 C1809.6 334.7 1818.2 335.1 1836.0 332.9 C1853.8 330.7 1887.9 332.1 1910.0 328.5 C1932.1 324.9 1947.1 317.8 1968.4 311.0 C1989.7 304.2 2016.1 293.3 2038.0 287.8 C2059.9 282.3 2081.3 279.7 2100.0 278.0 C2118.7 276.3 2130.7 275.5 2150.0 277.7 C2169.3 279.9 2198.3 284.4 2216.0 291.0 C2233.7 297.6 2246.8 307.1 2256.0 317.4 C2265.2 327.7 2269.7 340.3 2271.5 352.8 C2273.3 365.3 2271.1 380.0 2267.0 392.5 C2262.9 405.0 2252.5 416.1 2247.0 427.8 C2241.5 439.6 2235.1 451.2 2234.0 463.0 C2232.9 474.8 2237.2 486.7 2240.5 498.5 C2243.8 510.3 2251.2 523.6 2253.8 533.9 C2256.4 544.2 2257.5 553.0 2256.0 560.4 C2254.5 567.8 2251.7 573.2 2245.0 578.0 C2238.3 582.8 2225.4 586.0 2216.0 589.0 C2206.6 592.0 2205.9 591.0 2188.5 596.0 C2171.1 601.0 2137.2 612.1 2111.4 619.3 C2085.7 626.5 2061.6 633.3 2034.0 639.0 C2006.4 644.7 1971.7 650.4 1946.0 653.4 C1920.3 656.4 1898.3 657.5 1880.0 656.7 C1861.7 655.9 1848.5 652.2 1836.0 648.7 C1823.5 645.2 1812.6 641.3 1805.3 635.4 C1798.0 629.5 1793.8 620.8 1792.0 613.4 C1790.2 606.0 1790.6 603.1 1794.3 591.3 C1798.0 579.5 1808.5 558.2 1814.0 542.7 C1819.5 527.2 1825.5 511.0 1827.4 498.5 C1829.3 486.0 1828.9 481.6 1825.2 467.6 C1821.5 453.6 1809.8 430.1 1805.0 414.6 C1800.2 399.1 1796.8 387.0 1796.5 374.8 C1796.2 362.6 1796.4 348.7 1803.0 341.7 Z" fill="#e7f4f9"/>
<!-- back layer of folder -->
<path d="M1883 406 Q1883 394 1895 394 L2000 394 L2040 418 L2183 419 Q2196 419 2196 432 L2196 418 L1883 418 Z" fill="#b9e2ee"/>
<!-- front band (lighter) -->
<path d="M1883 420 Q1883 399 1900 399 L2005 399 L2044 423 L2181 424 Q2196 424 2196 439 L2196 418 L1883 418 Z" fill="#7fcbe0" opacity=".9"/>
<!-- photo card -->
<path d="M2084 333 L2200 359 L2184 436 L2068 436 Z" fill="#eef4f7" stroke="#fff" stroke-width="2.2"/>
<path d="M2070 436 Q2085 380 2110 385 Q2130 388 2140 420 L2150 436 Z" fill="#c9e7f0"/>
<circle cx="2167.2" cy="379.8" r="14" fill="#bfe3ee"/><circle cx="2167.2" cy="379.8" r="8.4" fill="#6fc4da"/>
<!-- white paper -->
<path d="M1890 350 L1975.3 336.8 L2009.8 363.8 L2018 410 L1897 410 Z" fill="#fff"/>
<path d="M1975.3 336.8 L1980.3 368.8 L2009.8 363.8 Z" fill="#b3e0ec"/>
<path d="M1902 365.1 L1934.8 360.4 M1904.5 380.3 L1974.4 370.2 M1906.2 396.6 L2005.6 381.5 M1908.7 411 L2007.3 397.5" stroke="#1fa1c2" stroke-width="1.5"/>
<!-- dark music card -->
<path d="M2010 350 L2062 336 Q2068 334 2070 340 L2080 380 L2082 430 L2020 430 L2009 362 Q2007 352 2010 350 Z" fill="#1fa1c2"/>
<circle cx="2045.1" cy="372.2" r="25" fill="none" stroke="#fff" stroke-width="1.6"/>
<path d="M2035.9 367.2 L2055.2 374.7 L2046.8 382.3 Z" fill="none" stroke="#fff" stroke-width="1.6"/>
<!-- darker teal bump right of note card -->
<path d="M2085 420 Q2095 405 2110 408 Q2125 412 2135 432 L2085 432 Z" fill="#6cc5dc"/>
<!-- light note card -->
<path d="M2034 377 Q2035 374 2040 375 L2093 386 Q2098 387 2098 392 L2092 440 L2022 440 Z" fill="#85cde0"/>
<path d="M2066.5 397 L2056.5 428" fill="none" stroke="#fff" stroke-width="1.9"/><path d="M2066.5 397 L2076 405.5 L2074.5 415 L2064 407" fill="none" stroke="#fff" stroke-width="1.8"/>
<ellipse cx="2050.5" cy="428.5" rx="6.8" ry="5.2" fill="#fff"/>
<!-- front folder -->
<path d="M1884 421 Q1884 407.3 1897.5 407.3 L2005.5 407.3 Q2010 407.3 2016 411 L2036 428 Q2042 432.3 2050 432.3 L2182 432.3 Q2196.4 432.3 2196.4 446 L2191.5 598 Q2191 618 2171 618 L1909 618 Q1889.5 618 1889 598 Z" fill="#1fa1c2"/>
<!-- code note -->
<path d="M2050.8 459 L2121.5 450.1 L2128.2 516.5 L2057.4 527.5 Z" fill="#a3dbe9"/>
<path d="M2081 480 L2071 491 L2083 500 M2099 476 L2111 486 L2101 496 M2093 474 L2085 503" fill="none" stroke="#1fa1c2" stroke-width="1.8"/>
<!-- paper clip -->
<path d="M2100.5 468 L2100.5 441 M2095.5 452 L2095.5 436.5 Q2095.5 430 2103.5 430 Q2111.8 430 2111.8 436.5 L2111.8 470 Q2111.8 477.5 2104 477.5 Q2096.5 477.5 2096.5 470 L2096.5 462" fill="none" stroke="#fff" stroke-width="1.8"/>
</svg>
<div class="a" style="left:1713px;top:712px;width:647px;height:1.2999999999999545px;background:#d9dde2"></div>
<div class="t" style="left:1735.00px;top:747.78px;font-size:19.4px;color:#3a4250;font-weight:400;-webkit-text-stroke:0.55px #3a4250">Tags</div>
<div class="a" style="left:1740px;top:793px;width:132px;height:34px;background:#e9ebef;border-radius:17px"></div>
<div class="t" style="left:1756.50px;top:799.61px;font-size:19.6px;color:#465062;font-weight:400;">Personal</div>
<svg class="a" style="left:1840px;top:797px;" width="24" height="24" viewBox="0 0 24 24"><circle cx="11.7" cy="12" r="11.3" fill="#8e9bad"/><path d="M7.3 7.6 L16.1 16.4 M16.1 7.6 L7.3 16.4" stroke="#fff" stroke-width="1.8"/></svg>
<svg class="a" style="left:2304px;top:800px;" width="20" height="20" viewBox="0 0 20 20"><path d="M10.2 1.5 L10.2 17 M2 9.3 L18.5 9.3" stroke="#6a7688" stroke-width="2"/></svg>
<div class="a" style="left:1732px;top:836.5px;width:609px;height:1.2999999999999545px;background:#e3e6ea"></div>
<div class="t" style="left:1924.50px;top:867.08px;font-size:19.4px;color:#3a4250;font-weight:400;-webkit-text-stroke:0.55px #3a4250">Type</div>
<div class="t" style="left:1983.50px;top:866.91px;font-size:19.6px;color:#465062;font-weight:400;">Folder</div>
<div class="t" style="left:1926.00px;top:907.08px;font-size:19.4px;color:#3a4250;font-weight:400;-webkit-text-stroke:0.55px #3a4250">Date</div>
<div class="t" style="left:1984.00px;top:906.91px;font-size:19.6px;color:#465062;font-weight:400;">Apr 20, 2020</div>
<div class="t" style="left:2116.00px;top:906.91px;font-size:19.6px;color:#465062;font-weight:400;">15:12:14</div>
<div class="a" style="left:0px;top:948px;width:538px;height:2px;background:#000"></div>
<div class="a" style="left:1665px;top:948px;width:695px;height:2px;background:#000"></div>
</body></html>
